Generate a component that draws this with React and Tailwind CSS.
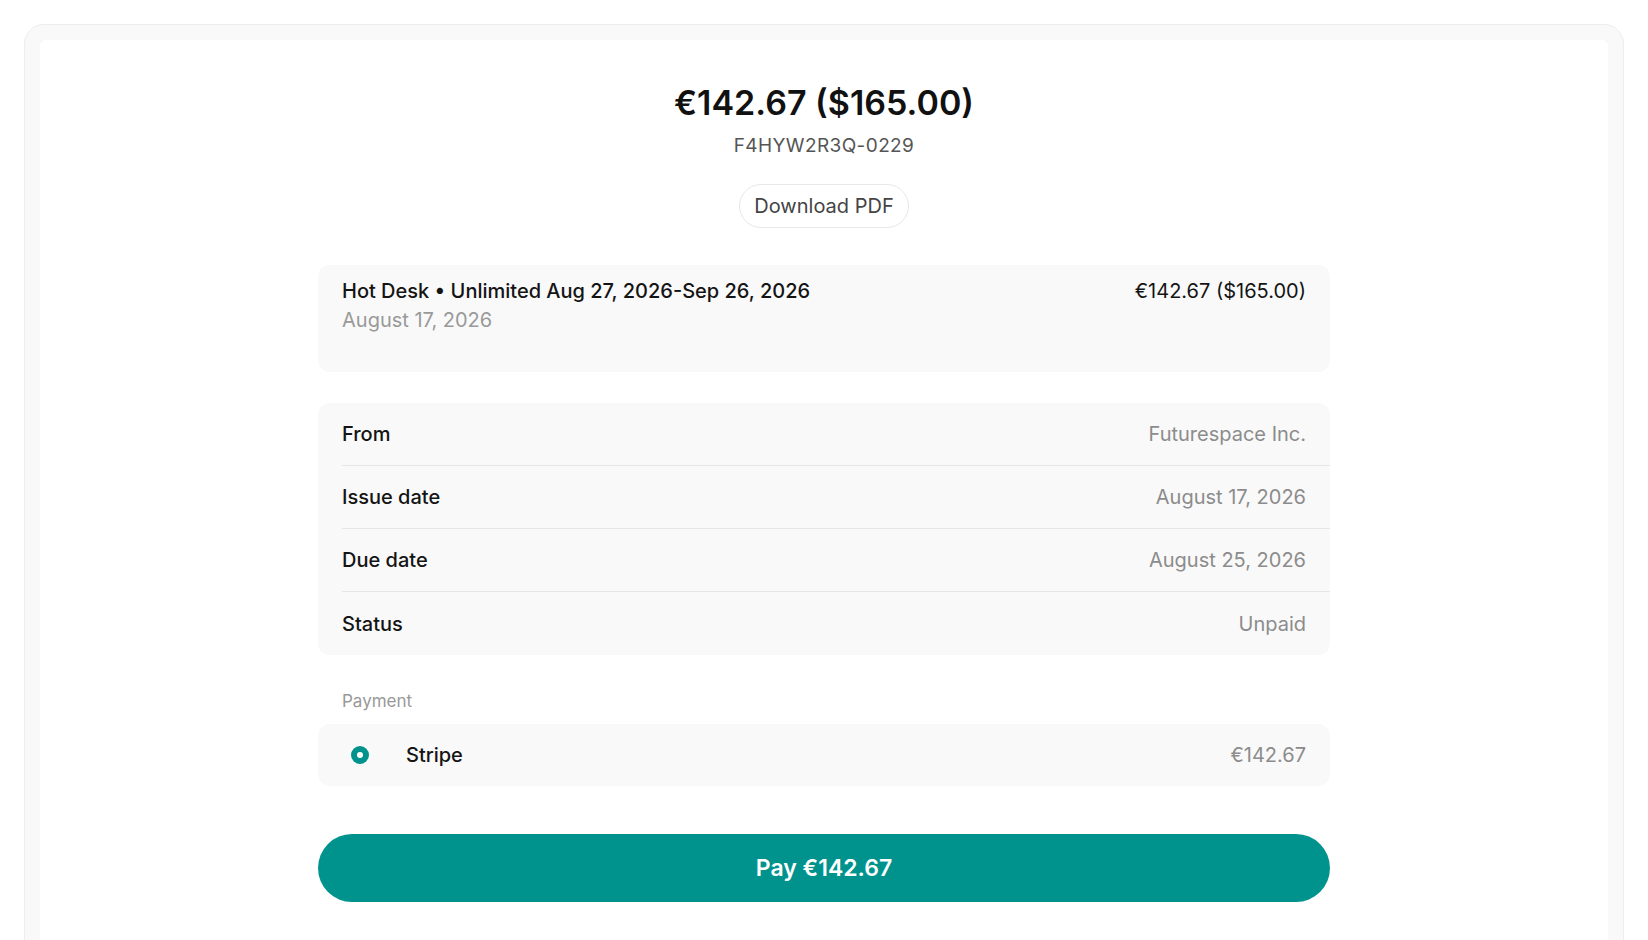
import React from 'react';

const details = [
  { label: 'From', value: 'Futurespace Inc.' },
  { label: 'Issue date', value: 'August 17, 2026' },
  { label: 'Due date', value: 'August 25, 2026' },
  { label: 'Status', value: 'Unpaid' },
];

function DetailRow({ label, value, last }) {
  return (
    <div className={'ml-6 flex h-[63px] items-center justify-between pr-6 ' + (last ? '' : 'border-b border-[#e6e6e6]')}>
      <span className="text-[20px] font-medium text-[#141414]">{label}</span>
      <span className="text-[20px] text-[#8c8c8c]">{value}</span>
    </div>
  );
}

export default function App() {
  return (
    <div className="min-h-screen bg-white px-6 pt-6 font-['Inter',sans-serif]">
      <div className="h-[940px] rounded-[20px] border border-[#ededed] bg-[#f9f9f9] px-[15px] pt-[15px]">
        <div className="h-full rounded-[6px] bg-white pt-[43px]">
          <div className="mx-auto flex w-[1012px] flex-col">
            <h1 className="text-center text-[34px] font-semibold leading-[40px] text-[#111]">€142.67 ($165.00)</h1>
            <p className="mt-[10px] text-center text-[19px] leading-[26px] tracking-[0.4px] text-[#555]">F4HYW2R3Q-0229</p>
            <div className="mt-[25px] flex justify-center">
              <button className="h-[44px] rounded-full border border-[#e8e8e8] bg-white px-[14px] text-[20px] text-[#444]">
                Download PDF
              </button>
            </div>

            {/* line item */}
            <div className="mt-[37px] flex h-[107px] justify-between rounded-[12px] bg-[#f9f9f9] px-6 pt-[13px]">
              <div className="flex flex-col gap-[3px]">
                <span className="text-[20px] font-medium leading-[26px] text-[#141414]">
                  Hot Desk • Unlimited Aug 27, 2026-Sep 26, 2026
                </span>
                <span className="text-[20px] leading-[26px] text-[#999]">August 17, 2026</span>
              </div>
              <span className="text-[20px] leading-[26px] text-[#141414]">€142.67 ($165.00)</span>
            </div>

            {/* invoice details */}
            <div className="mt-[31px] rounded-[12px] bg-[#f9f9f9]">
              {details.map((d, i) => (
                <DetailRow key={d.label} {...d} last={i === details.length - 1} />
              ))}
            </div>

            <p className="mt-[35px] pl-6 text-[17px] leading-[22px] text-[#999]">Payment</p>
            <div className="mt-3 flex h-[62px] items-center justify-between rounded-[12px] bg-[#f9f9f9] pr-6 pl-[33px]">
              <div className="flex items-center gap-[37px]">
                <span className="flex h-[18px] w-[18px] items-center justify-center rounded-full bg-[#00938d]">
                  <span className="h-[6px] w-[6px] rounded-full bg-white" />
                </span>
                <span className="text-[20px] font-medium text-[#141414]">Stripe</span>
              </div>
              <span className="text-[20px] text-[#8c8c8c]">€142.67</span>
            </div>

            <button className="mt-12 h-[68px] w-full rounded-full bg-[#00938d] text-[23px] font-semibold text-white">
              Pay €142.67
            </button>
          </div>
        </div>
      </div>
    </div>
  );
}
